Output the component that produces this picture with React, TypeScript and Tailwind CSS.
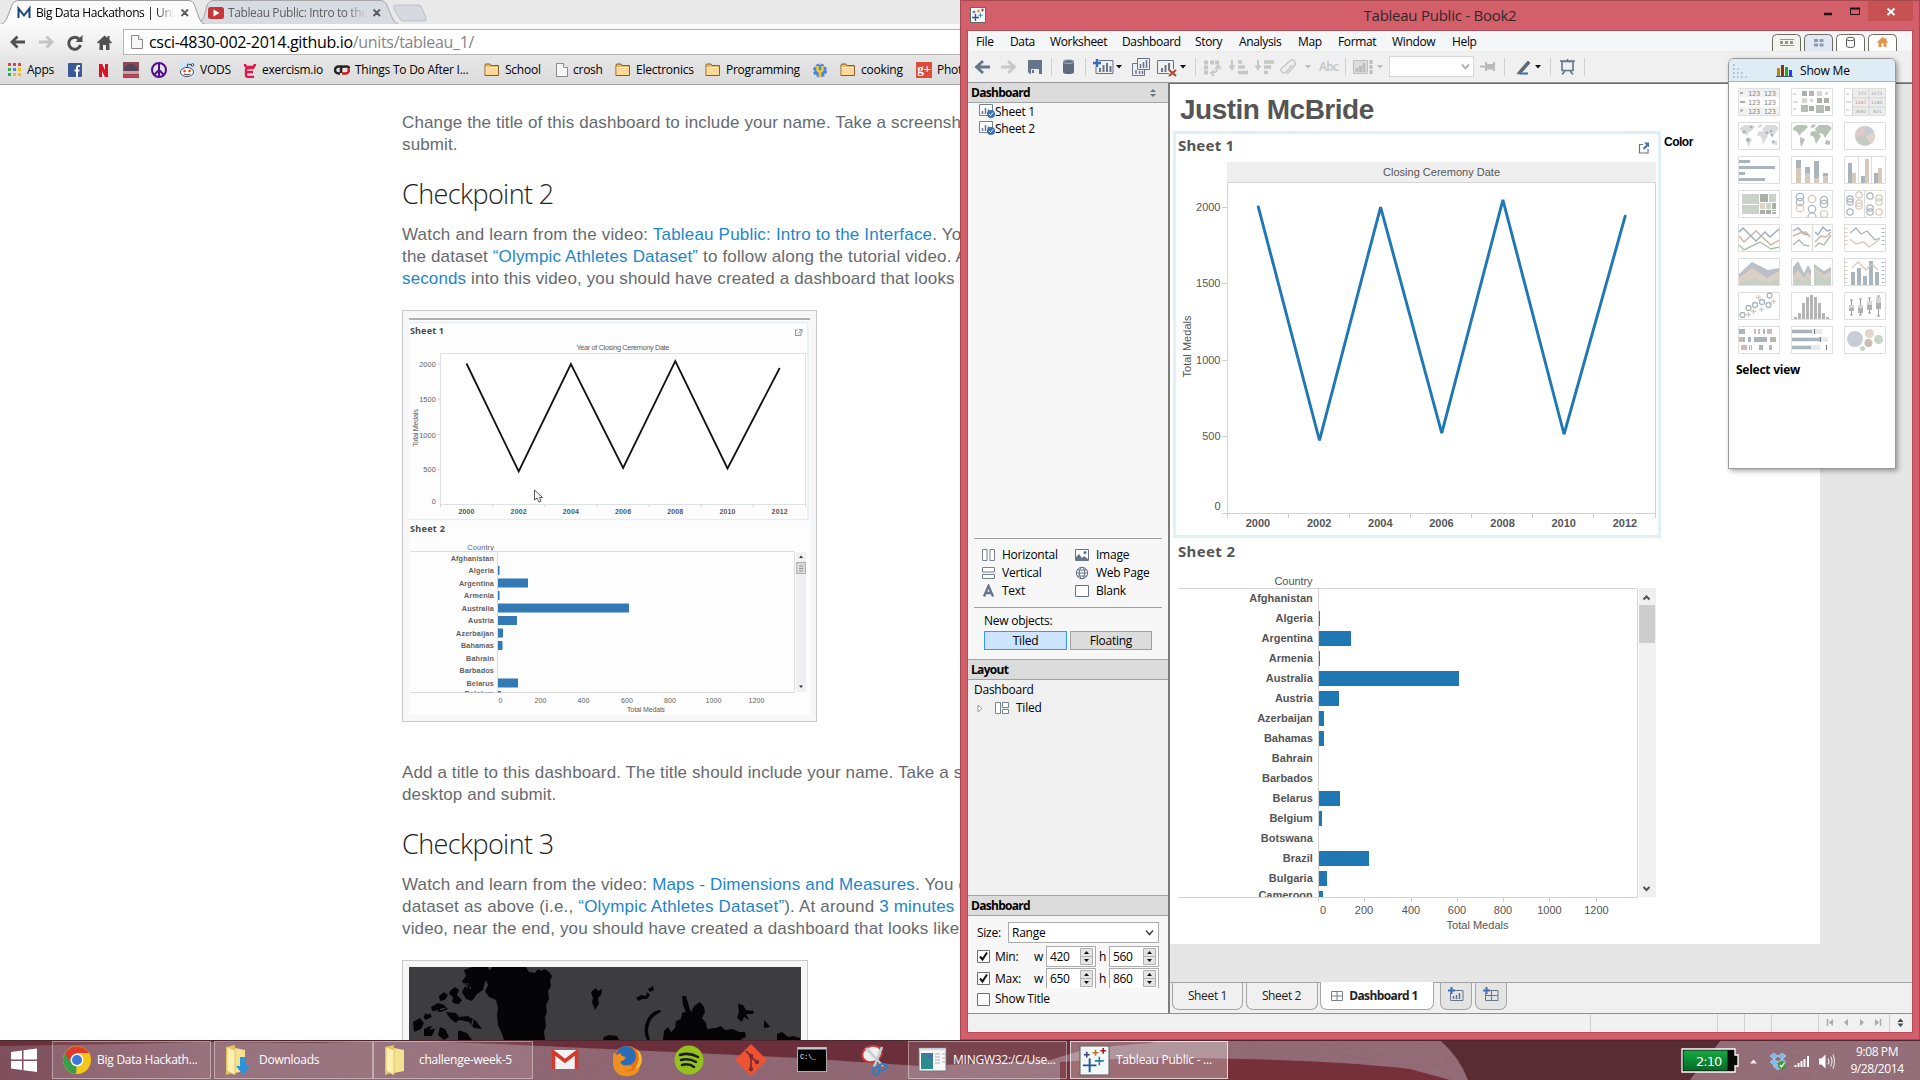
import React from "react";

const years = ["2000", "2002", "2004", "2006", "2008", "2010", "2012"];
const medals = [2004, 478, 2003, 525, 2050, 518, 1943];

const countries: [string, number][] = [
  ["Afghanistan", 0],
  ["Algeria", 1],
  ["Argentina", 32],
  ["Armenia", 1],
  ["Australia", 140],
  ["Austria", 20],
  ["Azerbaijan", 5],
  ["Bahamas", 5],
  ["Bahrain", 0],
  ["Barbados", 0],
  ["Belarus", 21],
  ["Belgium", 3],
  ["Botswana", 0],
  ["Brazil", 50],
  ["Bulgaria", 8],
  ["Cameroon", 4],
];

/* ---------- Browser ---------- */

function PageIcon() {
  return (
    <svg width="12" height="14" viewBox="0 0 12 14" className="shrink-0">
      <path d="M.5.5h7l4 4v9H.5z" fill="#f7f7f7" stroke="#8a8a8a" />
      <path d="M7.5.5v4h4" fill="#fff" stroke="#8a8a8a" />
    </svg>
  );
}

function FolderIcon() {
  return (
    <svg width="16" height="14" viewBox="0 0 16 14" className="shrink-0">
      <path d="M1 12V2.2Q1 1 2 1h4l1 1.5h7.5V12.500H1z" fill="#e9b96e" stroke="#8a5a2b" />
      <path d="M1.500 4.500h12.500v7.500H1.500z" fill="#fdd896" />
      <path d="M1.500 4.500h12.500" stroke="#fff0cf" />
    </svg>
  );
}

function ChromeTabs() {
  return (
    <div className="relative h-[24px] bg-[#e9e9e9]">
      <svg width="960" height="25" className="absolute left-0 top-0 z-0">
        <path d="M394 6q1-1 3-1h21q3 0 4 3l4 10q1 3-2 3h-20q-3 0-4-2l-6-10z" fill="#d6dae0" stroke="#bcbfc4" />
        <path d="M196 24.500q6-2 8-8l3-11q2-5 7-5h166q5 0 7 5l6 14q2 4 6 5z" fill="#d7dbe2" stroke="#a6a6a6" />
        <path d="M0 24.500h960" stroke="#a3a3a3" />
        <path d="M0 25v-1q5-1 7-6L12 5q2-4.500 7-4.500h169q5 0 6.500 4.500l5 14q2 4.500 6 5.500V26H0z" fill="#fbfbfb" />
        <path d="M0 24.500q5-1 7-6.500L12 5q2-4.500 7-4.500h169q5 0 6.500 4.500l5 14q2 4.500 6 5.500" fill="none" stroke="#9c9c9c" />
        <path d="M18.500 18V8.500l5.500 7 5.500-7V18" fill="none" stroke="#17407c" strokeWidth="2" />
        <path d="M181.500 9.500l6.500 6.500m0-6.500l-6.500 6.500M373.500 9.500l6.500 6.500m0-6.500l-6.500 6.500" stroke="#606060" strokeWidth="2" />
        <rect x="208" y="7" width="16" height="12" rx="2.500" fill="#c4383a" />
        <path d="M213.500 9.500l6 3.500-6 3.500z" fill="#fff" />
      </svg>
      <div className="relative flex h-full items-center pl-[36px] pt-[2px] text-[12px] tracking-[-0.4px]">
        <span className="w-[138px] overflow-hidden whitespace-nowrap text-black [mask-image:linear-gradient(90deg,#000_86%,transparent)]">Big Data Hackathons | University</span>
        <span className="ml-[54px] w-[138px] overflow-hidden whitespace-nowrap text-[#606060] [mask-image:linear-gradient(90deg,#000_86%,transparent)]">Tableau Public: Intro to the</span>
      </div>
    </div>
  );
}

function AddressBar() {
  return (
    <div className="relative z-10 flex h-[32px] items-center bg-gradient-to-b from-[#fbfbfb] to-[#e9e9e9] pl-[9px] pt-[4px]">
      <svg width="104" height="20" viewBox="9 32 104 20" className="shrink-0">
        <path d="M25 42H12m5.500-5.500L12 42l5.500 5.500" fill="none" stroke="#515151" strokeWidth="2.800" />
        <path d="M39 42h13m-5.500-5.500L52 42l-5.500 5.500" fill="none" stroke="#c4c4c4" strokeWidth="2.800" />
        <path d="M79.500 39.500A6 6 0 1 0 80.500 45" fill="none" stroke="#515151" strokeWidth="3" />
        <path d="M82.500 35v7h-7z" fill="#515151" />
        <path d="M104.500 35.500L97 42.500l1 1 1.500-1V50h3.500v-5h3v5h3.500v-7.500l1.500 1 1-1-2.500-2.500V36h-2v2z" fill="#515151" />
      </svg>
      <div className="ml-[10px] flex h-[26px] flex-1 items-center border border-r-0 border-[#b4b4b4] bg-white pl-[7px]">
        <PageIcon />
        <span className="ml-[6px] whitespace-nowrap text-[16px] tracking-[-0.33px] text-black">
          csci-4830-002-2014.github.io<span className="text-[#868686]">/units/tableau_1/</span>
        </span>
      </div>
    </div>
  );
}

function Mark({ w, icon, label }: { w: string; icon: React.ReactNode; label?: string }) {
  return (
    <div className={`flex shrink-0 items-center ${w}`}>
      {icon}
      {label && <span className="ml-[5px] whitespace-nowrap">{label}</span>}
    </div>
  );
}

function Bookmarks() {
  const colors = ["#e84335", "#e84335", "#e84335", "#34a853", "#4285f4", "#fbbc05", "#34a853", "#fbbc05", "#fbbc05"];
  return (
    <div className="flex h-[29px] items-center overflow-hidden border-b border-[#a5a5a5] bg-gradient-to-b from-[#e6e6e6] to-[#dcdcdc] pl-[8px] text-[12px] tracking-[-0.25px] text-black">
      <Mark w="w-[60px]" label="Apps" icon={
        <svg width="14" height="14">{colors.map((c, i) => <rect key={i} x={(i % 3) * 5} y={Math.floor(i / 3) * 5} width="3" height="3" fill={c} />)}</svg>
      } />
      <Mark w="w-[31px]" icon={<svg width="14" height="14"><rect width="14" height="14" rx="1" fill="#3b5998" /><path d="M12 3h-1.500Q9 3 9 4.500V14M6.500 7.500h5" fill="none" stroke="#fff" strokeWidth="2" /></svg>} />
      <Mark w="w-[24px]" icon={<svg width="9" height="13"><path d="M1.500 13V0L7.500 13V0" fill="none" stroke="#e01020" strokeWidth="3" /></svg>} />
      <Mark w="w-[28px]" icon={<svg width="16" height="16"><rect width="16" height="16" fill="#8b4753" /><path d="M1 6q7-8 14 0l-1 3H2z" fill="#50455a" /><path d="M0 9h16v3H0z" fill="#d5a0a5" /><path d="M0 13h16v2H0z" fill="#c74353" /></svg>} />
      <Mark w="w-[28px]" icon={<svg width="16" height="16" fill="none" stroke="#510d8d" strokeWidth="2"><circle cx="8" cy="8" r="7" /><path d="M8 1v14M8 8l-5 5M8 8l5 5" /></svg>} />
      <Mark w="w-[64px]" label="VODS" icon={
        <svg width="16" height="16"><rect width="16" height="16" fill="#cee6f8" /><ellipse cx="8" cy="10" rx="6.500" ry="4.500" fill="#fff" stroke="#444" /><circle cx="5.500" cy="9" r="1.300" fill="#f04010" /><circle cx="10.500" cy="9" r="1.300" fill="#f04010" /><path d="M5 12q3 1.500 6 0M8 5l1-3 4 1" fill="none" stroke="#444" /><circle cx="13.500" cy="3" r="1.300" fill="#fff" stroke="#444" /></svg>
      } />
      <Mark w="w-[91px]" label="exercism.io" icon={<svg width="14" height="15"><path d="M2 1q0 3 3 3h4q3 0 3-3M11 5H5q-2 0-2 2v5q0 2 2 2h6M3 9h7" fill="none" stroke="#e0184c" strokeWidth="2.400" /></svg>} />
      <Mark w="w-[150px]" label="Things To Do After I..." icon={<svg width="16" height="12" fill="none" strokeWidth="2.500"><path d="M8 2.500H4.500a3 3 0 0 0 0 7H6" stroke="#222" /><path d="M7 9V5q0-2.500 3-2.500h3q2 0 2 2" stroke="#222" /><path d="M8 9.500h4a3 3 0 0 0 2-5" stroke="#d01818" /></svg>} />
      <Mark w="w-[72px]" label="School" icon={<FolderIcon />} />
      <Mark w="w-[59px]" label="crosh" icon={<PageIcon />} />
      <Mark w="w-[90px]" label="Electronics" icon={<FolderIcon />} />
      <Mark w="w-[108px]" label="Programming" icon={<FolderIcon />} />
      <Mark w="w-[27px]" icon={<svg width="14" height="15"><circle cx="7" cy="7.500" r="5.500" fill="#4285f4" stroke="#4285f4" strokeWidth="3" strokeDasharray="3 1.300" /><path d="M4.500 3v3q0 2.500 2.500 2.500T9.500 6V3M7 8v6" fill="none" stroke="#f8c81c" strokeWidth="2.600" /></svg>} />
      <Mark w="w-[76px]" label="cooking" icon={<FolderIcon />} />
      <Mark w="w-[80px]" label="Photos" icon={<span className="flex h-[16px] w-[16px] shrink-0 items-center justify-center bg-[#dd4b39] pb-[3px] font-['Liberation_Serif'] text-[13px] font-bold leading-none text-white">g+</span>} />
    </div>
  );
}

function PreviewChart() {
  const px = years.map((_, i) => 466.500 + i * 52.200);
  const py = [363.500, 471.500, 364, 468, 361, 468.500, 368];
  const pw = [0, 1.500, 30, 1.500, 131, 19, 5, 4.500, 0, 0, 20, 3];
  return (
    <svg width="401" height="398" viewBox="409 317 401 398" className="font-['Liberation_Sans']">
      <rect x="409" y="317" width="401" height="398" fill="#fdfdfd" />
      <path d="M409 319h401" stroke="#97959b" strokeWidth="1.500" />
      <path d="M409 322.500h399v197H409" fill="none" stroke="#e5edf2" strokeWidth="1.500" />
      <text x="410" y="334" fontSize="9" fontWeight="bold" fill="#4a4a4a" className="font-['Noto_Sans']" textLength="34">Sheet 1</text>
      <path d="M798 330h-2.500v5.500h5.500V332M798 333.500l4-4m-3 0h3v3" fill="none" stroke="#6d7b92" strokeWidth=".8" />
      <rect x="440.500" y="353.500" width="365" height="151" fill="#fff" stroke="#dde2e6" />
      <g fontSize="7.300" fill="#606060">
        <text x="623" y="349.500" textAnchor="middle" textLength="93">Year of Closing Ceremony Date</text>
        {["2000", "1500", "1000", "500", "0"].map((t, i) => <text key={t} x="436" y={[366.500, 401.500, 437.500, 472, 503.500][i]} textAnchor="end">{t}</text>)}
        <text transform="translate(418 428) rotate(-90)" textAnchor="middle" textLength="38">Total Medals</text>
      </g>
      <path d="M437 364h4M437 399h4M437 434.500h4M437 470h4" stroke="#d5d5d5" />
      <g fontSize="7" fontWeight="bold" fill="#555">
        {years.map((y, i) => <text key={y} x={px[i]} y="513.500" textAnchor="middle">{y}</text>)}
      </g>
      <path d={[0, 1, 2, 3, 4, 5, 6, 7].map((i) => `M${440.500 + i * 52.150} 504v3`).join("")} stroke="#d5d5d5" />
      <polyline points={px.map((x, i) => `${x},${py[i]}`).join(" ")} fill="none" stroke="#111" strokeWidth="1.800" />
      <path d="M534.500 490v10l2.500-2 2 4 2-1-1.500-3.500h3z" fill="#fff" stroke="#444" strokeWidth=".9" />
      <text x="410" y="532" fontSize="9" fontWeight="bold" fill="#4a4a4a" className="font-['Noto_Sans']" textLength="35">Sheet 2</text>
      <text x="494" y="549.500" fontSize="7.300" fill="#606060" textAnchor="end">Country</text>
      <path d="M410 551.500h384.500v141H410M497.500 552v141" fill="none" stroke="#dcdcdc" />
      <svg x="409" y="552" width="390" height="140.500" viewBox="409 552 390 140.500">
        {countries.slice(0, 12).map(([n], i) => (
          <g key={n}>
            <text x="494" y={(i === 11 ? 558.500 : 560.500) + i * 12.500} fontSize="7.200" fontWeight="bold" fill="#606060" textAnchor="end">{n}</text>
            <rect x="498" y={553.500 + i * 12.500} width={pw[i]} height="9" fill="#3379b5" />
          </g>
        ))}
      </svg>
      <rect x="796" y="552" width="10" height="140" fill="#f0f0f2" />
      <rect x="796.500" y="562.500" width="9" height="11" fill="#dadada" stroke="#b0b0b0" />
      <path d="M799 566h4M799 568.500h4M799 571h4" stroke="#888" strokeWidth=".8" />
      <path d="M801 555.500l2 2.500h-4zM801 688l2-2.500h-4z" fill="#333" />
      <g fontSize="7" fill="#606060" textAnchor="middle">
        {["0", "200", "400", "600", "800", "1000", "1200"].map((t, i) => <text key={t} x={[500.500, 540.500, 583.500, 627, 670, 713.500, 756.500][i]} y="703">{t}</text>)}
        <text x="646" y="711.500" textLength="38">Total Medals</text>
      </g>
    </svg>
  );
}

function DarkMap() {
  return (
    <svg width="392" height="73" viewBox="409 967 392 73">
      <rect x="409" y="967" width="392" height="73" fill="#3d3d3f" />
      <g fill="#050507">
        <path d="M492 967h34l3 5 6 1 3-4 3 2 4-2 4 3 3 4-2 5 1 5-3 5 1 8-3 6 1 7-2 5 1 9-2 6 1 8h-41l-2-6-4-9-1-10 1-7-2-8-7-3-4-6 3-6-2-5 2-4-2-4 5-3z" />
        <path d="M464 970l8-3h16l2 7-5 8-2 8-6 4-5 7-6-2-4-7 3-6-3-5 4-5z" />
        <path d="M450 991l5-4 4 3-2 5 5 5-4 5-6-3 1-5-4-3zM439 996l5-4 4 3-3 5-5 1zM431 1007l7-4 6 2 4 4-7 3-9-1zM423 1014l7-1 2 4-7 3zM413 1022l7-4 4 5-3 6-7 3zM446 1012l10 1 3 4 9-1 8 5 6 8-8-1-5-6-8-2-6 3-6-6zM424 1029l6-3 5 3-3 7h-8zM440 1027l5 2 4 8-5 3-6-5zM458 1030l9 3 5 7h-14z" />
        <path d="M591 992l5-4 2 3 4-2-1 6-3 3 1 6-4 6-3-8 1-4zM636 998l5-3 5 1 1-4 3 3-3 4-5 0-3 2zM648 989l5-3 1 4-4 2zM682 996l4 0 2 7 2 7 5 7 2 7-5-3-6-9-3-7z" />
        <path d="M661 1012q-9 4-11 10-4 8 0 18h-3q-5-10 0-20 4-9 13-10zM663 1040l1-9 4-4 3 5 4-4 1-7 5-2 1-6 6-2 2 4 4-9 6-4 4 5 1 5-3 6 4 5 1 6 9-1 5-2 4 4 8-1 6 3 6 0 1 5-5 2 5 6zM604 1037l5-2 8 1 2 4h-16zM738 1004l5 1 3 5 8 1-1 3-7 0 3 6-5-3-2 5-5-4 2-6zM764 1020l3 3 3 4-6 1zM777 1034l5-2 6 5 5-1 7 2v2h-23z" />
      </g>
      <path d="M417 1008l16-28M420 1016l42-13M430 1029l30-8M452 1035l16-12M463 985l8 3M475 1006l-4 26M410 1020l24-32" stroke="#3d3d3f" strokeWidth="1.500" strokeDasharray="5 2" />
      <path d="M455 974q2 12 14 10" fill="none" stroke="#3d3d3f" />
    </svg>
  );
}

function Lnk({ children }: { children: React.ReactNode }) {
  return <span className="text-[#1d86cb]">{children}</span>;
}

function Article() {
  return (
    <div className="h-[955px] overflow-hidden whitespace-nowrap bg-white pl-[402px] pt-[27px] font-['Liberation_Sans'] text-[17px] leading-[22px] tracking-[0.16px] text-[#666a6e]">
      <p className="h-[44px] tracking-[0.13px]">Change the title of this dashboard to include your name. Take a screenshot<br />submit.</p>
      <h2 className="mt-[19px] h-[40px] font-['Open_Sans'] text-[27px] font-light leading-[38px] tracking-[-0.6px] text-[#222]">Checkpoint 2</h2>
      <p className="mt-[9px] h-[66px]">
        <span className="tracking-[0.19px]">Watch and learn from the video: <Lnk>Tableau Public: Intro to the Interface</Lnk>. You can</span><br />
        the dataset <Lnk>“Olympic Athletes Dataset”</Lnk> to follow along the tutorial video. At<br />
        <span className="tracking-[0.13px]"><Lnk>seconds</Lnk> into this video, you should have created a dashboard that looks like</span>
      </p>
      <div className="mt-[20px] h-[412px] w-[415px] border border-[#c9c9c9] bg-[#f7f7f7] p-[6px]"><PreviewChart /></div>
      <p className="mt-[40px] h-[44px] tracking-[0.12px]">Add a title to this dashboard. The title should include your name. Take a screenshot<br />desktop and submit.</p>
      <h2 className="mt-[19px] h-[40px] font-['Open_Sans'] text-[27px] font-light leading-[38px] tracking-[-0.6px] text-[#222]">Checkpoint 3</h2>
      <p className="mt-[9px] h-[66px]">
        Watch and learn from the video: <Lnk>Maps - Dimensions and Measures</Lnk>. You can<br />
        <span className="tracking-[0.18px]">dataset as above (i.e., <Lnk>“Olympic Athletes Dataset”</Lnk>). At around <Lnk>3 minutes 20</Lnk></span><br />
        <span className="tracking-[0.14px]">video, near the end, you should have created a dashboard that looks like this</span>
      </p>
      <div className="mt-[20px] h-[120px] w-[406px] border border-[#c9c9c9] bg-[#f7f7f7] p-[6px]"><DarkMap /></div>
    </div>
  );
}

/* ---------- Workbook window ---------- */

function AppGlyph({ s }: { s: number }) {
  return (
    <svg width={s} height={s} viewBox="0 0 16 16" className="shrink-0">
      <rect x=".5" y=".5" width="15" height="15" fill="#f4f6f8" stroke="#666" strokeWidth={s > 20 ? 0.6 : 1} />
      <path d="M5.500 7v7M2 10.500h7" stroke="#1f5b93" strokeWidth={s > 20 ? 1 : 1.300} />
      <path d="M10.500 6v4.500M8.200 8.200h4.600" stroke="#2a7f9e" strokeWidth=".8" />
      <path d="M4 3.500v3M2.500 5h3" stroke="#3b3f7a" strokeWidth=".8" />
      <path d="M8.500 2.500v3M7 4h3" stroke="#c4721a" strokeWidth=".8" />
      <path d="M12.500 1.500v3M11 3h3" stroke="#a02020" strokeWidth=".8" />
    </svg>
  );
}

function TitleBar() {
  return (
    <div className="relative flex h-[30px] items-center pb-[2px] pl-[2px]">
      <AppGlyph s={16} />
      <span className="absolute inset-x-0 top-[3px] text-center text-[15px] leading-[22px] tracking-[-0.25px] text-[#33262a]">Tableau Public - Book2</span>
      <svg width="93" height="21" viewBox="1820 0 93 21" className="absolute right-[-1px] top-0">
        <rect x="1868" y="0" width="45" height="20" fill="#c75050" />
        <path d="M1824 13h8" stroke="#1d1215" strokeWidth="2.500" />
        <path d="M1850.500 7.500h9v6h-9z" fill="none" stroke="#1d1215" />
        <path d="M1850 7.500h10" stroke="#1d1215" strokeWidth="2" />
        <path d="M1887.500 7.500l7 6.500m0-6.500l-7 6.500" stroke="#fff" strokeWidth="2" />
      </svg>
    </div>
  );
}

function MenuBar() {
  const items: [string, string][] = [
    ["File", "w-[34px]"], ["Data", "w-[40px]"], ["Worksheet", "w-[72px]"], ["Dashboard", "w-[73px]"], ["Story", "w-[44px]"],
    ["Analysis", "w-[59px]"], ["Map", "w-[40px]"], ["Format", "w-[54px]"], ["Window", "w-[60px]"], ["Help", "w-[40px]"],
  ];
  return (
    <div className="flex h-[21px] items-center border-b border-[#e9eaeb] bg-[#f5f6f8] pl-[8px] text-[12px] tracking-[-0.35px] text-black">
      {items.map(([t, w]) => <span key={t} className={`${w} shrink-0 whitespace-nowrap pt-[2px]`}>{t}</span>)}
      <svg width="128" height="17" viewBox="1771 35 128 17" className="ml-auto mr-[13px] self-end">
        {["#f3f3ef", "#e2e8f4", "#fff", "#fff"].map((f, i) => <path key={i} d={`M${1772.500 + i * 32} 52V39.500q0-4 4-4h20q4 0 4 4V52`} fill={f} stroke="#6b6b60" />)}
        <path d="M1780 40.500h14M1780 46.500h14" stroke="#9a9680" /><path d="M1780 43.500h13" stroke="#9a9680" strokeWidth="3" strokeDasharray="3 2" />
        <path d="M1814 40h4v3h-4zM1819.500 40h4v3h-4zM1814 44.500h4v3h-4zM1819.500 44.500h4v3h-4z" fill="#8a9ab0" />
        <path d="M1846.500 40v7q0 1.500 4 1.500t4-1.500v-7" fill="#fff" stroke="#555" /><ellipse cx="1850.500" cy="40" rx="4" ry="1.700" fill="#fff" stroke="#555" />
        <path d="M1882.500 38l-6 5.500h2v4.500h8v-4.500h2l-2-2v-2.500h-1.500v1z" fill="#e8954a" /><path d="M1881.500 44.500h2V48h-2z" fill="#fff" />
      </svg>
    </div>
  );
}

function Toolbar() {
  return (
    <div className="h-[31px] border-b border-[#979797] bg-[#f0f0f0]">
      <svg width="944" height="30" viewBox="968 52 944 30">
        <path d="M990 67h-13m6-6l-6.500 6 6.500 6" fill="none" stroke="#66758a" strokeWidth="2.800" />
        <path d="M1001 67h13m-6-6l6.500 6-6.500 6" fill="none" stroke="#c8c8c8" strokeWidth="2.800" />
        <path d="M1028 60h14v14h-12l-2-2z" fill="#66758a" /><path d="M1031 69h8v5h-8z" fill="#eee" /><path d="M1032 70h2v3h-2z" fill="#66758a" />
        <path d="M1051.500 58v18M1085.500 58v18M1195.500 58v18M1345.500 58v18M1504.500 58v18M1550.500 58v18M1584.500 58v18" stroke="#cfcfcf" />
        <path d="M1063 62v10q0 2 5.500 2t5.500-2V62z" fill="#5d6b7d" /><ellipse cx="1068.500" cy="61.500" rx="5.500" ry="2" fill="#66758a" stroke="#c5ccd5" strokeWidth=".7" />
        <path d="M1099 60.500h14v13h-17v-7" fill="none" stroke="#66758a" /><path d="M1100 72v-4M1103.500 72v-7M1107 72v-9M1110.500 72v-6" stroke="#66758a" strokeWidth="2" /><path d="M1097 59v8M1093 63h8" stroke="#3a6db5" strokeWidth="2.500" />
        <path d="M1116 65h6l-3 3.500zM1180 65h6l-3 3.500zM1535 65h6l-3 3.500z" fill="#111" />
        <path d="M1137.500 58.500h12v11h-12zM1137 63.500h-4.500v12h12V70" fill="none" stroke="#66758a" /><path d="M1140.500 68v-4M1143.500 68v-6M1146.500 68v-8M1136 74v-4M1139.500 74v-3M1142.500 74v-3" stroke="#66758a" strokeWidth="1.500" />
        <path d="M1169 73.500h-11.500v-13h16V69" fill="none" stroke="#66758a" /><path d="M1162 72v-4M1165.500 72v-7M1169 70v-7" stroke="#66758a" strokeWidth="2" /><path d="M1169 70l7 6m0-6l-7 6" stroke="#b8492e" strokeWidth="2.300" />
        <g stroke="#c6c6c6" fill="none" strokeWidth="2">
          <path d="M1204 62.500h4M1210 62.500h4M1215 62.500h4M1206 65.500v4M1206 70.500v4" strokeWidth="4" /><path d="M1211 73q7 0 7-7m-3 3l3-4 3 4m-7 1l-3 3 3 3" strokeWidth="1.600" />
          <path d="M1232 60v8m-2.500-2.500L1232 69l2.500-3.500" /><path d="M1238 72.500h10M1238 67h7M1238 62h4" strokeWidth="3.500" />
          <path d="M1258 60v8m-2.500-2.500L1258 69l2.500-3.500" /><path d="M1264 62h10M1264 67h7M1264 72.500h4" strokeWidth="3.500" />
          <path d="M1292 65l-6 7q-2 2-4 0t0-4l8-7q2-2 4 0t1 4l-8 9" strokeWidth="1.500" />
        </g>
        <path d="M1305 65h6l-3 3.500zM1377 65h6l-3 3.500z" fill="#bbb" />
        <text x="1319" y="71" fontSize="12" fill="#c3c3c3" className="font-['Open_Sans'] font-semibold" textLength="20">Abc</text>
        <path d="M1353.500 60.500h14v13h-14z" fill="#ddd" stroke="#bebebe" /><path d="M1357 72v-4M1360.500 72v-6M1364 72v-9M1371 60v14" stroke="#bebebe" strokeWidth="3" /><path d="M1368 64.500h6M1368 69.500h6" stroke="#f0f0f0" />
        <path d="M1389.500 56.500h84v20h-84z" fill="#fff" stroke="#d5d5d5" /><path d="M1462 64.500l3.500 4 3.500-4" fill="none" stroke="#b3b3b3" strokeWidth="2" />
        <path d="M1480 66.500h6M1486 62v9M1487 66.500h5M1494 62v9" stroke="#bbb" strokeWidth="2" /><path d="M1487 64h7v5.500h-7z" fill="#bbb" />
        <path d="M1528 61l-8 9-3 4 5-2 8-9z" fill="#5d6b7d" stroke="#5d6b7d" /><path d="M1519 73.500h9" stroke="#3a6db5" strokeWidth="2" />
        <path d="M1560 61h15M1562 61.500h11v9h-11zM1567.500 59v2M1565 71l-3 3.500M1570 71l3 3.500" fill="none" stroke="#66758a" strokeWidth="1.600" />
      </svg>
    </div>
  );
}

function SheetIcon() {
  return (
    <svg width="16" height="15" viewBox="0 0 16 15">
      <path d="M.5.500h13v11H.5z" fill="#fff" stroke="#77828f" />
      <path d="M3.500 10V7M6.500 10V4M9.500 10V5.500" stroke="#66758a" strokeWidth="1.500" />
      <circle cx="12" cy="10" r="4" fill="#3f73b8" /><path d="M10 10l1.500 1.500 2.500-3" fill="none" stroke="#fff" />
    </svg>
  );
}

const objIcons: Record<string, React.ReactNode> = {
  Horizontal: <path d="M.5 1.500h4.500v11H.5zM8 1.500h4.500v11H8z" fill="#fff" stroke="#77828f" />,
  Vertical: <path d="M.5 1.500h12V6H.5zM.5 8.500h12V12.500H.5z" fill="#fff" stroke="#77828f" />,
  Text: <path d="M2 12.500L6.500 2 11 12.500M3.500 9h6" fill="none" stroke="#66758a" strokeWidth="2.400" />,
  Image: <><path d="M.5 1.500h13v11H.5z" fill="#fff" stroke="#66758a" /><path d="M1 12V9l3-3 3 4 2-2 4 3v1z" fill="#66758a" /><circle cx="10" cy="4.500" r="1.500" fill="#3f73b8" /></>,
  "Web Page": <g fill="none" stroke="#66758a"><circle cx="7" cy="7" r="5.700" /><ellipse cx="7" cy="7" rx="2.700" ry="5.700" /><path d="M1 7h12M2 4h10M2 10h10" /></g>,
  Blank: <path d="M.5 1.500h13v11H.5z" fill="#fff" stroke="#66758a" />,
};

function Obj({ name, gap }: { name: string; gap: string }) {
  return (
    <div className={`flex items-center ${gap}`}>
      <svg width="14" height="14" className="shrink-0">{objIcons[name]}</svg>
      <span>{name}</span>
    </div>
  );
}

function PanelHead({ label, children }: { label: string; children?: React.ReactNode }) {
  return (
    <div className="flex h-[20px] shrink-0 items-center justify-between border-b border-[#a3a3a3] bg-[#dcdcdc] pl-[3px] pr-[12px] font-bold tracking-[-0.7px]">
      <span>{label}</span>
      {children}
    </div>
  );
}

function UpDown({ c }: { c: string }) {
  return <svg width="6" height="8" viewBox="0 0 6 8"><path d="M3 0l3 3H0zM3 8l3-3H0z" fill={c} /></svg>;
}

function Check({ on }: { on?: boolean }) {
  return (
    <svg width="13" height="13" className="shrink-0">
      <path d="M.5.500h12v12H.5z" fill="#fff" stroke="#707070" />
      {on && <path d="M3 6.500l2.500 3 4.500-7" fill="none" stroke="#111" strokeWidth="2" />}
    </svg>
  );
}

function Spin({ v }: { v: string }) {
  return (
    <div className="flex h-[21px] w-[50px] shrink-0 items-center justify-between border border-[#ababab] bg-white pl-[3px] pr-[2px]">
      <span className="tracking-[-0.4px]">{v}</span>
      <svg width="13" height="17"><path d="M.5.500h12v16H.5zM.5 8.500h12" fill="#e4e4e4" stroke="#b0b0b0" /><path d="M6.500 3l2.500 3H4zM6.500 14L9 11H4z" fill="#111" /></svg>
    </div>
  );
}

function SizeRow({ label, w, h }: { label: string; w: string; h: string }) {
  return (
    <div className="flex items-center">
      <Check on />
      <span className="ml-[5px] w-[39px]">{label}</span>
      <span className="w-[12px]">w</span>
      <Spin v={w} />
      <span className="ml-[3px] w-[10px]">h</span>
      <Spin v={h} />
    </div>
  );
}

function SidePanel() {
  return (
    <div className="flex w-[200px] shrink-0 flex-col text-[12px] leading-[16px] tracking-[-0.25px] text-black">
      <PanelHead label="Dashboard"><UpDown c="#66758a" /></PanelHead>
      <div className="flex h-[556px] flex-col bg-[#f7f7f7]">
        <div className="h-[435px] pl-[11px]">
          {["Sheet 1", "Sheet 2"].map((s) => <div key={s} className="flex h-[17px] items-center">
            <SheetIcon />{s}</div>)}
        </div>
        <div className="mx-[6px] h-[70px] border-y border-[#9f9f9f] pt-[7px]">
          <div className="grid h-[54px] grid-cols-[93px_1fr] grid-rows-3 items-center pl-[8px]">
            <Obj name="Horizontal" gap="gap-[6px]" /><Obj name="Image" gap="gap-[7px]" />
            <Obj name="Vertical" gap="gap-[6px]" /><Obj name="Web Page" gap="gap-[7px]" />
            <Obj name="Text" gap="gap-[6px]" /><Obj name="Blank" gap="gap-[7px]" />
          </div>
        </div>
        <div className="px-[16px] pt-[5px]">
          <div className="h-[18px]">New objects:</div>
          <div className="flex gap-[3px] text-center leading-[18px]">
            <div className="h-[19px] w-[83px] border border-[#3399ff] bg-[#cce4ff]">Tiled</div>
            <div className="h-[19px] w-[82px] border border-[#a0a0a0] bg-[#dcdcdc]">Floating</div>
          </div>
        </div>
      </div>
      <div className="h-px shrink-0 bg-[#a3a3a3]" />
      <PanelHead label="Layout" />
      <div className="h-[215px] shrink-0 bg-[#f0f0f0] pl-[6px] pt-[2px]">
        <div className="h-[17px]">Dashboard</div>
        <div className="flex h-[18px] items-center pl-[3px]">
          <svg width="7" height="9"><path d="M1 1l4 3.500L1 8z" fill="#fff" stroke="#999" /></svg>
          <svg width="15" height="13" className="ml-[11px]"><path d="M.5.500h5v11h-5zM7.500.500h6v5h-6zM7.500 7.500h6v4h-6z" fill="#fff" stroke="#77828f" /></svg>
          <span className="ml-[6px]">Tiled</span>
        </div>
      </div>
      <div className="h-px shrink-0 bg-[#a3a3a3]" />
      <PanelHead label="Dashboard" />
      <div className="flex-1 bg-[#f7f7f7] pl-[9px] pt-[6px]">
        <div className="flex items-center">
          <span className="w-[31px]">Size:</span>
          <div className="flex h-[21px] w-[151px] items-center justify-between border border-[#ababab] bg-white pl-[3px] pr-[4px]">
            Range<svg width="9" height="6"><path d="M1 .5l3.500 4 3.500-4" fill="none" stroke="#444" strokeWidth="1.500" /></svg>
          </div>
        </div>
        <div className="mt-[3px] h-[22px]"><SizeRow label="Min:" w="420" h="560" /></div>
        <div className="h-[20px] overflow-hidden"><SizeRow label="Max:" w="650" h="860" /></div>
        <div className="mt-[3px] flex items-center gap-[5px]"><Check />Show Title</div>
      </div>
    </div>
  );
}

function LineSheet() {
  const px = years.map((_, i) => 1258.300 + i * 61.150);
  return (
    <div className="h-[407px] w-[488px] border-[3px] border-[#e1f0f7] bg-white">
      <svg width="481" height="401" viewBox="1176 134 481 401" className="font-['Liberation_Sans']">
        <text x="1178" y="151" fontSize="15" fontWeight="bold" fill="#555" className="font-['Noto_Sans']" textLength="56">Sheet 1</text>
        <path d="M1643 144.500h-3.500v8.500h8.500v-4" fill="none" stroke="#66758a" strokeWidth="1.200" /><path d="M1643.500 149l4-4" stroke="#3f6fb5" strokeWidth="2" /><path d="M1644 142.500h5v5z" fill="#3f6fb5" />
        <rect x="1227" y="162" width="429" height="20" fill="#efefef" />
        <path d="M1227.500 182.500h428v331h-428z" fill="none" stroke="#d4d4d4" />
        <path d="M1222 207.500h5M1222 283.500h5M1222 360.500h5M1222 436.500h5M1222 513.500h5" stroke="#cfcfcf" />
        <path d={[1227.500, 1288.500, 1349.500, 1410.500, 1471.500, 1532.500, 1593.500, 1655.500].map((x) => `M${x} 513v5`).join("")} stroke="#cfcfcf" />
        <g fontSize="11" fill="#555">
          <text x="1441.500" y="176" textAnchor="middle" textLength="117">Closing Ceremony Date</text>
          {["2000", "1500", "1000", "500", "0"].map((t, i) => <text key={t} x="1220.500" y={[211, 287, 364, 440, 510][i]} textAnchor="end">{t}</text>)}
          <text transform="translate(1191 346.500) rotate(-90)" textAnchor="middle" textLength="62">Total Medals</text>
        </g>
        <g fontSize="11" fontWeight="bold" fill="#555">
          {years.map((y, i) => <text key={y} x={px[i] - 0.300} y="527" textAnchor="middle">{y}</text>)}
        </g>
        <polyline points={px.map((x, i) => `${x},${513.500 - medals[i] * 0.153}`).join(" ")} fill="none" stroke="#1f77b4" strokeWidth="2.900" strokeLinecap="round" strokeLinejoin="bevel" />
      </svg>
    </div>
  );
}

function BarSheet() {
  return (
    <svg width="485" height="400" viewBox="1175 540 485 400" className="mt-[2px] ml-[2px] font-['Liberation_Sans']">
      <text x="1178" y="557" fontSize="15" fontWeight="bold" fill="#555" className="font-['Noto_Sans']" textLength="57">Sheet 2</text>
      <text x="1312.500" y="585" fontSize="11" fill="#555" textAnchor="end" textLength="38">Country</text>
      <path d="M1178 588.500h459.500v309H1178M1318.500 589v313" fill="none" stroke="#d4d4d4" />
      <path d="M1364.500 898v4M1411.500 898v4M1457.500 898v4M1503.500 898v4M1549.500 898v4M1596.500 898v4" stroke="#cfcfcf" />
      <svg x="1178" y="589" width="459" height="308" viewBox="1178 589 459 308">
        {countries.map(([n, w], i) => (
          <g key={n}>
            <text x="1312.800" y={(n === "Cameroon" ? 599 : 602) + i * 20} fontSize="11" fontWeight="bold" fill="#555" textAnchor="end">{n}</text>
            <rect x="1319" y={591 + i * 20} width={w} height="15" fill="#1f77b4" />
          </g>
        ))}
      </svg>
      <rect x="1639" y="588" width="17" height="309" fill="#f0f0f0" /><rect x="1639" y="605" width="16" height="38" fill="#cdcdcd" />
      <path d="M1643.500 599.500l3-3 3 3M1643.500 887l3 3 3-3" fill="none" stroke="#505050" strokeWidth="2" />
      <g fontSize="11" fill="#555" textAnchor="middle">
        {["0", "200", "400", "600", "800", "1000", "1200"].map((t, i) => <text key={t} x={[1323, 1364, 1411, 1457, 1503, 1549.500, 1596.500][i]} y="914">{t}</text>)}
        <text x="1477.500" y="929" textLength="62">Total Medals</text>
      </g>
    </svg>
  );
}

const B = "#aab4bd", T = "#d8c9bd", G = "#c3cdc3", DG = "#a8b0a8";

function MapThumb({ c }: { c: string }) {
  return <path d="M2 6l4-3 9 0 2 2-4 4-3 2-1 3-4-5-3-1zM9 15l5 2-2 5-2 3-1-6zM19 5l3-3 3 1-3 3zM20 10l3-1 4 1 3 4-3 5-2 3-2-7-4-2zM24 7l4-4 9 0 4 3-3 4-4 6-2-4-4-1-3-2zM35 18l4 1v4l-5-1z" fill={c} />;
}

const thumbs: React.ReactNode[] = [
  <><path d="M1 1h40v8H1zM1 19h40v8H1z" fill="#f2f2f2" /><g fontSize="7" fill="#858585" className="font-['DejaVu_Sans_Mono']"><text x="10" y="8" textLength="28">123 123</text><text x="10" y="17" textLength="28">123 123</text><text x="10" y="25.500" textLength="28">123 123</text></g><path d="M2 5h3M2 14h5M2 22.500h3" stroke="#aaa" strokeWidth="2" /></>,
  <><path d="M11 3h5v5h-5z" fill={DG} /><path d="M18 3h5v5h-5z" fill="#c0b0b4" /><path d="M26 3h5v5h-5zM34 4h3v3h-3zM11 10h5v5h-5zM19 11h3v3h-3z" fill="#d3d8d0" /><path d="M26 10h5v5h-5zM33 10h5v5h-5zM18 18h5v5h-5zM34 18h5v5h-5z" fill={DG} /><path d="M10 17h7v7h-7zM25 17h8v8h-8z" fill="#b6bfb6" /><path d="M2 6h3M2 14h5M2 21h3" stroke="#ddd" strokeWidth="2" /></>,
  <><path d="M9 1h32v26H9z" fill="#ecedec" /><path d="M9 10h16v9H9z" fill="#f4ebea" /><path d="M9 10h32M9 19h32M25 1v26M8.500 1v26" stroke="#d4d4d4" /><g fontSize="4.500" fill="#999" className="font-['DejaVu_Sans']"><text x="14" y="7">172</text><text x="27" y="7">1272</text><text x="11" y="16">1347</text><text x="27" y="16">1180</text><text x="11" y="25">2082</text><text x="29" y="25">821</text></g><path d="M2 6h3M2 14h5M2 22h3" stroke="#ddd" strokeWidth="2" /></>,
  <><MapThumb c="#d9dadb" /><g fill={B}><circle cx="6" cy="10" r="1.800" /><circle cx="10" cy="18" r="2" /><circle cx="13" cy="5" r="1.300" /><circle cx="29" cy="11" r="1.500" /><circle cx="33" cy="9" r="1.300" /><circle cx="34" cy="13" r="1.300" /><circle cx="35" cy="20" r="1.300" /></g></>,
  <MapThumb c="#b9c2b6" />,
  <><circle cx="21" cy="14" r="10" fill={G} /><path d="M21 14V4a10 10 0 0 0-10 11z" fill="#dcc9cb" /><path d="M21 14V4a10 10 0 0 1 9 6z" fill="#c6ccd6" /><path d="M21 14l9-4a10 10 0 0 1-3 12z" fill="#e0d3c8" /></>,
  <path d="M1 5.500h11M1 11.500h36M1 17.500h6M1 23.500h26" stroke={B} strokeWidth="3" />,
  <><path d="M7.500 4v23M16.500 11v16M25.500 5v22M34.500 17v10" stroke={B} strokeWidth="5" /><path d="M7.500 12v15M16.500 17v10M25.500 22v5M34.500 20v7" stroke={T} strokeWidth="5" /></>,
  <><path d="M6 7v20M19 20v7M32 17v10" stroke={B} strokeWidth="4" /><path d="M10 17v10M23 3v24M36 12v15" stroke={T} strokeWidth="4" /><path d="M14.500 1v26M27.500 1v26" stroke="#ddd" /></>,
  <><path d="M4 4h17v10H4zM4 15h17v9H4zM31 4h7v8h-7zM28 13h5v6h-5z" fill="#cbd2ca" /><path d="M22 4h8v8h-8zM34 13h4v6h-4zM22 20h5v4h-5zM28 20h5v4h-5zM34 20h4v1h-4zM34 22h4v2h-4z" fill={DG} /><path d="M22 13h5v6h-5z" fill="#e0d2c6" /></>,
  <g fill="none" strokeWidth="1.200"><g stroke={B}><circle cx="9" cy="7" r="3.700" /><circle cx="9" cy="12" r="3.700" /><circle cx="33" cy="10" r="3.700" /><circle cx="33" cy="14" r="3.700" /><circle cx="21" cy="19" r="3.700" /><path d="M17 27a4 4 0 0 1 8 0" /></g><g stroke={T}><circle cx="9" cy="18" r="3.700" /><circle cx="21" cy="9" r="3.700" /><circle cx="33" cy="24" r="3.500" /></g></g>,
  <g fill="none" strokeWidth="1.200"><path d="M20.500 1v26" stroke="#ddd" /><g stroke={B}><circle cx="6" cy="9" r="3.200" /><circle cx="6" cy="12" r="3.200" /><circle cx="6" cy="22" r="3.200" /><circle cx="26" cy="6" r="3.200" /><circle cx="26" cy="18" r="3.200" /><circle cx="26" cy="22" r="3.200" /></g><g stroke={T}><circle cx="15" cy="5" r="3.200" /><circle cx="15" cy="13" r="3.200" /><circle cx="15" cy="16" r="3.200" /><circle cx="35" cy="8" r="3.200" /><circle cx="35" cy="12" r="3.200" /><circle cx="35" cy="22" r="3.200" /></g></g>,
  <g fill="none" strokeWidth="1.400"><path d="M1 8l4-4 13 13 9-9 5 5 9-8" stroke="#9eabb8" /><path d="M1 12l5 6L18 7l15 14 8-5" stroke="#c9b5a6" /><path d="M1 21l5 5 16-8 11 7 8-2" stroke="#a9bfa9" /></g>,
  <g fill="none" strokeWidth="1.400"><path d="M21.500 1v26" stroke="#ddd" /><path d="M2 7l5-3 6 6 5 1M24 8l3 3 5-8 4 4 4-1" stroke="#9eabb8" /><path d="M2 12l7-3 6-1 4 5M24 18l6-6 5 1 5-5" stroke="#c9b5a6" /><path d="M2 21l6-5 5 5 5 1M24 23l4-4 5 2 7-10" stroke="#a9bfa9" /></g>,
  <g fill="none" strokeWidth="1.300"><path d="M6 9l6-5 5 6 6-3 8 9 5-2" stroke={B} /><path d="M6 15l6 5 8-2 5 5 6-4 5-4" stroke={T} /><path d="M2 4v20" stroke={T} strokeDasharray="1 3" strokeWidth="3" /><path d="M39 4v20" stroke={B} strokeDasharray="1 3" strokeWidth="3" /></g>,
  <><path d="M1 16L14 4l16 8 11-2v17H1z" fill="#b9c1c7" /><path d="M1 20l13-10 15 10 12-7v14H1z" fill="#dccfc3" /><path d="M1 26l15-6 15 5 10-5v7H1z" fill="#c7d0c6" /></>,
  <><path d="M2 9l5-6 6 12 4-8 3 5v15H2zM23 6l10 7 7-4v18H23z" fill="#b9c1c7" /><path d="M2 18l5-6 6 8 4-6 3 5v8H2zM23 9l10 8 7-4v14H23z" fill="#dccfc3" /><path d="M2 23l5-3 5 5 4-6 4 5v3H2zM23 12l11 9 6-3v9H23z" fill="#c7d0c6" /></>,
  <><path d="M9 14v13M15 10v17M21 18v9M27 3v24M33 14v13" stroke={B} strokeWidth="4" /><path d="M8 10l6-6 8 8 6-6 6 6" fill="none" stroke={T} strokeWidth="1.400" /><path d="M2 4v22" stroke={T} strokeDasharray="1 3" strokeWidth="3" /><path d="M39 4v22" stroke={B} strokeDasharray="1 3" strokeWidth="3" /></>,
  <g fill="none" strokeWidth="1.300"><g stroke={B}><circle cx="4.500" cy="23" r="2.500" /><circle cx="10.500" cy="16" r="2.500" /><circle cx="17" cy="13" r="2.500" /><circle cx="24" cy="10" r="2.500" /><circle cx="30.500" cy="13" r="2.500" /><circle cx="31.500" cy="3.500" r="2.500" /></g><path d="M8 22.500h5M10.500 20v5M13 19.500h5M15.500 17v5M21 17.500h5M23.500 15v5M18 5.500h5M20.500 3v5M33 9.500h5M35.500 7v5" stroke={T} /></g>,
  <path d="M4.500 25v2M8.500 21v6M12.500 11v16M16.500 5v22M20.500 3v24M24.500 5v22M28.500 11v16M32.500 21v6M36.500 25v2" stroke="#b5b5b5" strokeWidth="3" />,
  <><path d="M7.500 8v15M16.500 7v16M25.500 6v15M34.500 4v20M6 8h3M6 23h3M15 7h3M15 23h3M24 6h3M24 21h3M33 4h3M33 24h3" stroke="#999" /><path d="M5 13h5v5H5zM14 13h5v4h-5zM23 9h5v5h-5zM32 5h5v7h-5z" fill="#d5d5d5" /><path d="M5 16h5v3H5zM14 16h5v5h-5zM23 13h5v5h-5zM32 11h5v6h-5z" fill="#b0b0b0" /></>,
  <g strokeWidth="5"><path d="M1 5.500h6M25 5.500h2M10 13.500h3M16 13.500h13M21 21.500h4" stroke={B} /><path d="M16 5.500h2M20 5.500h2M29 5.500h5M1 13.500h4M3 21.500h6" stroke="#ccbab5" /><path d="M5 13.500h2M32 13.500h6M11 21.500h1M13 21.500h1" stroke="#b0b9ad" /><path d="M31 21.500h3" stroke="#c7b4b8" /></g>,
  <><path d="M1 5.500h30M1 13.500h36M1 21.500h28" stroke="#e6ebf0" strokeWidth="5" /><path d="M1 5.500h20M1 13.500h29M1 21.500h19" stroke={B} strokeWidth="3" /><path d="M23.500 3v5M29.500 11v5M35.500 19v5" stroke="#777" /></>,
  <><circle cx="11" cy="13" r="8" fill="#c9cdd5" /><circle cx="25.500" cy="7.500" r="4.500" fill="#e2d7cc" /><circle cx="24.500" cy="17" r="4" fill="#cdbfb8" /><circle cx="34.500" cy="13.500" r="4.500" fill="#c9d3c8" /><circle cx="18.500" cy="22.500" r="2.500" fill="#c9d3c8" /></>,
];

function ShowMe() {
  return (
    <div className="absolute left-[767px] top-[57px] z-20 h-[411px] w-[168px] rounded-t-[6px] border border-[#999] bg-white shadow-[2px_2px_5px_rgba(0,0,0,0.35)]">
      <div className="flex h-[23px] items-center rounded-t-[5px] border-b border-[#a9b5bd] bg-[#deecf6] text-[12px] tracking-[-0.2px] text-black">
        <svg width="66" height="22" viewBox="0 0 66 22" className="shrink-0">
          <path d="M4 6h2M4 10h6M4 14h10M4 18h14" stroke="#aaaab2" strokeWidth="1.500" strokeDasharray="1.500 2.500" />
          <path d="M49.500 9v8" stroke="#b58a00" strokeWidth="3" /><path d="M53.500 6v11" stroke="#902c08" strokeWidth="3" /><path d="M57.500 8v9" stroke="#18b018" strokeWidth="3" /><path d="M61.500 11v6" stroke="#2a35ff" strokeWidth="3" /><path d="M47 17.500h17" stroke="#456" />
        </svg>
        <span className="ml-[5px] pt-[2px]">Show Me</span>
      </div>
      <div className="grid grid-cols-3 gap-x-[11px] gap-y-[6px] pl-[9px] pr-[9px] pt-[6px]">
        {thumbs.map((t, i) => (
          <svg key={i} width="42" height="28" viewBox="0 0 42 28"><path d="M.5.500h41v27H.5z" fill="#fff" stroke="#dfdfdf" />{t}</svg>
        ))}
      </div>
      <div className="pl-[7px] pt-[7px] text-[12px] font-bold leading-[18px] tracking-[-0.25px] text-black">Select view</div>
    </div>
  );
}

function SheetTabs() {
  const base = "flex h-[27px] items-center justify-center rounded-b-[7px] border border-t-0 border-[#a5a5a5]";
  return (
    <div className="flex h-[31px] border-t border-[#a3a3a3] bg-[#f0f0f0] pl-[2px] text-[12px] tracking-[-0.35px] text-[#222]">
      <div className={`${base} w-[71px] bg-[#f0f0f0]`}>Sheet 1</div>
      <div className={`${base} ml-[3px] w-[72px] bg-[#f0f0f0] pr-px`}>Sheet 2</div>
      <div className={`${base} relative -top-px ml-[2px] h-[28px] w-[114px] gap-[6px] bg-white pr-[5px] font-bold tracking-[-0.6px]`}>
        <svg width="12" height="10"><path d="M.5.500h11v9H.5zM.5 5h11M6 .5v9" fill="none" stroke="#77828f" /></svg>Dashboard 1
      </div>
      <div className={`${base} ml-[6px] w-[32px] bg-[#e4e4e4] pb-[3px]`}>
        <svg width="16" height="15"><path d="M6 3.500h9v10H2.500V6" fill="none" stroke="#66758a" /><path d="M5.500 12v-3M8.500 12V8M11.500 12V6" stroke="#66758a" strokeWidth="1.500" /><path d="M3.500 0v7M0 3.500h7" stroke="#3f6fb5" strokeWidth="2" /></svg>
      </div>
      <div className={`${base} ml-[3px] w-[32px] bg-[#e4e4e4] pb-[3px]`}>
        <svg width="16" height="15"><path d="M6 3.500h9v10H2.500V6M2.500 8.500h12M8.500 3.500v10" fill="none" stroke="#66758a" /><path d="M3.500 0v7M0 3.500h7" stroke="#3f6fb5" strokeWidth="2" /></svg>
      </div>
    </div>
  );
}

function StatusBar() {
  return (
    <div className="h-[19px] border-t border-[#8f8f8f] bg-[#f0f0f0]">
      <svg width="944" height="18" viewBox="968 1014 944 18">
        <path d="M1590.500 1014v18M1717.500 1014v18M1744.500 1014v18M1771.500 1014v18M1818.500 1014v18M1889.500 1014v18" stroke="#d0d0d0" />
        <path d="M1827.500 1019v7" stroke="#aaa" strokeWidth="1.500" /><path d="M1833 1019v7l-4-3.500zM1848 1019v7l-4-3.500zM1860 1019v7l4-3.500zM1875 1019v7l4-3.500z" fill="#aaa" /><path d="M1880.500 1019v7" stroke="#aaa" strokeWidth="1.500" />
        <path d="M1900.500 1018.500l3 3.500h-6zM1900.500 1027l3-3.500h-6z" fill="#3a4656" />
      </svg>
    </div>
  );
}

function Workbook() {
  return (
    <div className="relative h-[1040px] w-[960px] border border-[#a8484f] bg-[#d35f6a] px-[7px]">
      <TitleBar />
      <div className="flex h-[1001px] flex-col outline outline-1 outline-[#b44e58]">
        <MenuBar />
        <Toolbar />
        <div className="flex min-h-0 flex-1 bg-[#f0f0f0]">
          <SidePanel />
          <div className="flex min-w-0 flex-1 flex-col border-l-2 border-[#7d7d7d]">
            <div className="h-[899px] border-t border-[#6c6c6c] bg-[#e6e6e6]">
              <div className="h-[860px] w-[650px] bg-white pl-[3px]">
                <h1 className="h-[47px] pl-[7px] pt-[8px] font-['Liberation_Sans'] text-[28px] font-bold leading-[36px] tracking-[-0.5px] text-[#555]">Justin McBride</h1>
                <div className="flex">
                  <LineSheet />
                  <span className="ml-[3px] mt-[4px] font-['Liberation_Sans'] text-[12px] font-bold leading-[14px] tracking-[-0.5px] text-black">Color</span>
                </div>
                <BarSheet />
              </div>
            </div>
            <SheetTabs />
          </div>
        </div>
        <StatusBar />
      </div>
      <ShowMe />
    </div>
  );
}

/* ---------- Taskbar ---------- */

function TaskButton({ w, icon, label, cls }: { w: string; icon: React.ReactNode; label: string; cls?: string }) {
  return (
    <div className={`${w} flex h-[38px] shrink-0 items-center border border-white/40 bg-white/10 ${cls ?? ""}`}>
      {icon}
      <span className="ml-[6px] whitespace-nowrap">{label}</span>
    </div>
  );
}

const folder = (
  <><path d="M3 3l9-2v27l-9 3z" fill="#e5c65e" /><path d="M12 4l10 2v21l-10 2z" fill="#f5e290" /><path d="M4 3l8 3v25l-8-4z" fill="#fbf0b0" stroke="#d4b450" strokeWidth=".6" /></>
);

function Taskbar() {
  return (
    <div className="relative flex h-[40px] items-center overflow-hidden bg-[#8c6470] text-[12px] tracking-[-0.25px] text-white">
      <svg width="1920" height="40" className="absolute inset-0">
        <defs>
          <filter id="grain"><feTurbulence type="fractalNoise" baseFrequency=".07 .45" numOctaves="2" /><feColorMatrix values="0 0 0 0 .25 0 0 0 0 .1 0 0 0 0 .15 0 0 0 .9 -.3" /></filter>
          <linearGradient id="left" x2="1"><stop offset="0" stopColor="#7e4e5c" /><stop offset=".12" stopColor="#8e6572" /><stop offset="1" stopColor="#95707a" /></linearGradient>
        </defs>
        <rect width="1920" height="40" fill="url(#left)" />
        <rect width="1920" height="40" filter="url(#grain)" opacity=".5" />
        <path d="M0 0h420l-100 3-120-1-80 2-120 2zM400 0h760l-10 3-60 5-40 12-130 6-120-8-150-7-130-6z" fill="#6a2f3a" />
        <path d="M1060 22q80-6 180-3 100 2 170 10l40 11h-390z" fill="#75303a" />
        <path d="M1440 0h281l-31 40h-222q-8-22-28-40z" fill="#592b33" />
        <path d="M0 .5h1920" stroke="#4d2730" />
      </svg>
      <div className="relative flex h-full w-full items-center">
        <svg width="52" height="40" className="shrink-0"><path d="M11 12l11-1.500V19.500H11zM23.500 10.300L37 8.500v11H23.500zM11 21h11v9L11 28.500zM23.500 21H37v11l-13.500-1.800z" fill="#fff" /></svg>
        <TaskButton w="w-[159px]" cls="mr-[3px] pl-[10px]" label="Big Data Hackath..." icon={
          <svg width="28" height="28" viewBox="0 0 28 28" className="shrink-0"><circle cx="14" cy="14" r="14" fill="#f5c518" /><path d="M14 14L1.900 7A14 14 0 0 0 13 28z" fill="#3a9e47" /><path d="M14 7h12A14 14 0 0 0 2 7l5 9z" fill="#dd3b2e" /><circle cx="14" cy="14" r="6.500" fill="#fff" /><circle cx="14" cy="14" r="5" fill="#3b78d8" /></svg>
        } />
        <TaskButton w="w-[159px]" cls="pl-[8px]" label="Downloads" icon={<svg width="30" height="32" className="shrink-0">{folder}<path d="M17 13h6v9h4l-7 9-7-9h4z" fill="#2a93dd" /></svg>} />
        <TaskButton w="w-[160px]" cls="pl-[8px]" label="challenge-week-5" icon={<svg width="31" height="32" className="shrink-0">{folder}</svg>} />
        <svg width="376" height="40" viewBox="533 1040 376 40" className="shrink-0">
          <path d="M552 1050h26v19h-26z" fill="#f2f2f2" /><path d="M553.500 1069v-17l11.500 9 11.500-9v17" fill="none" stroke="#d5382c" strokeWidth="3.500" />
          <circle cx="627" cy="1060" r="14" fill="#e8731a" /><circle cx="626" cy="1056" r="10" fill="#2a6cb5" /><path d="M613 1053l4 2 3-2 2 3 4 1-2 3-4 2q3 5 9 3l4 2q-4 5-10 3 12 5 17-8 1 12-10 14-17 2-17-15z" fill="#f09020" /><path d="M636 1049q6 9-1 20 9-3 6-14-1-4-5-6z" fill="#f8c030" />
          <circle cx="689" cy="1060" r="14.500" fill="#95c11f" /><path d="M680 1055q9-3 18 2M681 1060q8-2 15 2M682 1065q7-2 12 2" fill="none" stroke="#1a1a1a" strokeWidth="2.500" strokeLinecap="round" />
          <path d="M751 1044l16 16-16 16-16-16z" fill="#ee5133" /><path d="M746 1051l5 5v13M751 1057l6 5" stroke="#7a2e2c" strokeWidth="1.800" fill="none" /><circle cx="751" cy="1056" r="2.200" fill="#7a2e2c" /><circle cx="757" cy="1062" r="2.200" fill="#7a2e2c" /><circle cx="751" cy="1069" r="2.200" fill="#7a2e2c" />
          <rect x="797.500" y="1047.500" width="29" height="24" fill="#000" stroke="#aaa" /><path d="M798 1048.500h28" stroke="#c9ced6" strokeWidth="2" /><text x="800" y="1059" fontSize="7" fill="#fff" className="font-['Liberation_Mono']">C:\_</text>
          <ellipse cx="872" cy="1054" rx="10" ry="8" fill="#eee" stroke="#c43a3a" strokeWidth="2" transform="rotate(-20 872 1054)" /><path d="M866 1048l17 18M882 1047l-8 20" stroke="#c5ccd2" strokeWidth="2.500" /><ellipse cx="883" cy="1067" rx="4" ry="3" fill="none" stroke="#2a7ec5" strokeWidth="2" /><ellipse cx="876" cy="1071" rx="3" ry="4" fill="none" stroke="#2a7ec5" strokeWidth="2" />
        </svg>
        <TaskButton w="w-[159px]" cls="-ml-px mr-[3px] pl-[9px]" label="MINGW32:/C/Use..." icon={
          <svg width="29" height="28" className="shrink-0"><path d="M1 2h27v23H1z" fill="#f8f8f8" stroke="#777" /><path d="M1 2.500h27v2H1z" fill="#d6dde4" /><path d="M3 7h12v16H3z" fill="#2f8c8c" /><path d="M3 7h12v8z" fill="#4376a8" /><path d="M17 8h5M17 11h5M17 14h5M17 17h5M24 8h3M24 12h3M24 16h3" stroke="#a5b0b5" /></svg>
        } />
        <TaskButton w="w-[158px]" cls="border-white/70 bg-white/30 pl-[8px]" label="Tableau Public - ..." icon={<AppGlyph s={31} />} />
        <svg width="160" height="40" viewBox="1680 1040 160 40" className="ml-[452px] shrink-0">
          <defs><linearGradient id="bat" x2="0" y2="1"><stop offset="0" stopColor="#1ca845" /><stop offset=".5" stopColor="#0b8a33" /><stop offset="1" stopColor="#066a24" /></linearGradient></defs>
          <path d="M1682 1049h53v6h3v11h-3v6h-53z" fill="#0a0a0a" stroke="#fff" strokeWidth="1.300" /><rect x="1683.500" y="1050.500" width="44" height="20" fill="url(#bat)" />
          <text x="1709" y="1065.500" fontSize="13" fill="#fff" textAnchor="middle" className="font-['DejaVu_Sans']" textLength="26">2:10</text>
          <path d="M1753.500 1059.500l3.500 4h-7z" fill="#eee" />
          <path d="M1774 1053l4 3-4 3-4-3zM1782 1053l4 3-4 3-4-3zM1774 1059l4 3-4 3-4-3zM1782 1059l4 3-4 3-4-3zM1778 1064l5 2-5 4-5-4z" fill="#74bdf0" stroke="#c4e3f8" strokeWidth=".6" /><circle cx="1782" cy="1065" r="4" fill="#3a9b32" /><path d="M1780 1065l1.500 2 3-4" stroke="#fff" fill="none" strokeWidth="1.300" />
          <path d="M1795.500 1067v-2M1798.500 1067v-4M1801.500 1067v-6M1804.500 1067v-8M1808 1067v-11" stroke="#fff" strokeWidth="2" />
          <path d="M1819 1064.500v-6h2.500l4-4v14l-4-4z" fill="#fff" /><path d="M1828 1058.500q2 3 0 6M1830.500 1056.500q3 5 0 10M1833 1054.500q3 7 0 14" fill="none" stroke="#ddd" strokeWidth="1.200" />
        </svg>
        <div className="ml-px w-[72px] text-center leading-[17px] tracking-[-0.4px]"><div>9:08 PM</div><div>9/28/2014</div></div>
      </div>
    </div>
  );
}

export default function App() {
  return (
    <div className="h-[1080px] w-[1920px] overflow-hidden bg-white font-['Open_Sans','Noto_Sans',sans-serif]">
      <div className="flex h-[1040px]">
        <div className="h-[1040px] w-[960px] overflow-hidden">
          <ChromeTabs />
          <AddressBar />
          <Bookmarks />
          <Article />
        </div>
        <Workbook />
      </div>
      <Taskbar />
    </div>
  );
}
